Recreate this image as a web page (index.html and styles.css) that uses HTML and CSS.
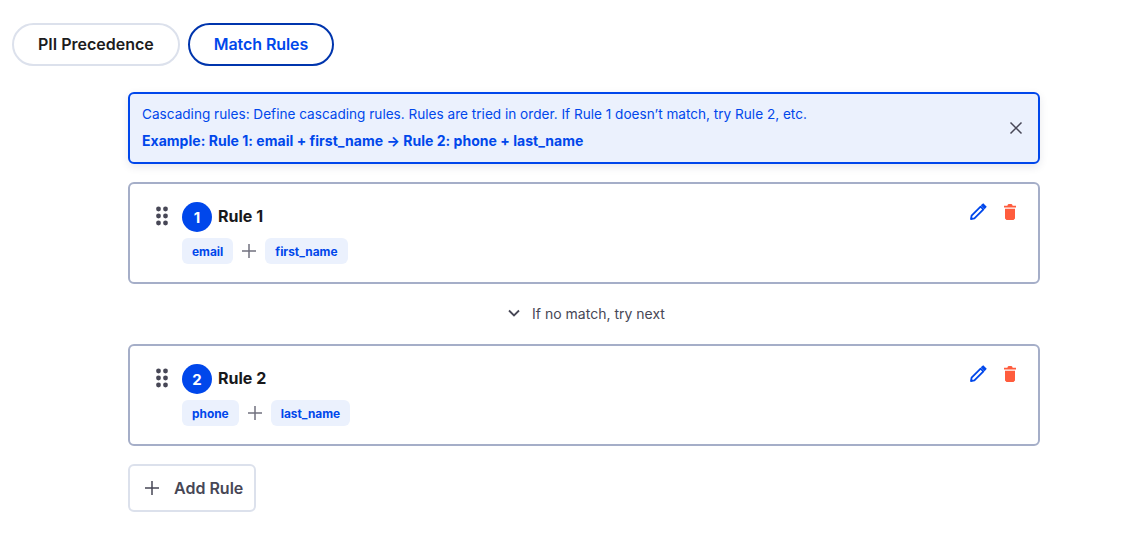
FILE: index.html
```html
<!DOCTYPE html>
<html lang="en">
<head>
    <meta charset="UTF-8">
    <title>Match Rules</title>
    <link rel="stylesheet" href="styles.css">
</head>
<body>
    <div class="tabs">
        <button class="tab">PII Precedence</button>
        <button class="tab tab-active">Match Rules</button>
    </div>

    <div class="content">
        <div class="alert">
            <div class="alert-text">
                <p>Cascading rules: Define cascading rules. Rules are tried in order. If Rule 1 doesn’t match, try Rule 2, etc.</p>
                <p class="alert-example">Example: Rule 1: email + first_name → Rule 2: phone + last_name</p>
            </div>
            <svg class="alert-close" width="14" height="14" viewBox="0 0 14 14"><path d="M1.5 1.5l11 11M12.5 1.5l-11 11" stroke="#474756" stroke-width="1.5" fill="none"/></svg>
        </div>

        <div class="rule">
            <svg class="drag" width="12" height="20" viewBox="0 0 12 20"><g fill="#474756"><circle cx="2.500" cy="3" r="2.400"/><circle cx="9.500" cy="3" r="2.400"/><circle cx="2.500" cy="10" r="2.400"/><circle cx="9.500" cy="10" r="2.400"/><circle cx="2.500" cy="17" r="2.400"/><circle cx="9.500" cy="17" r="2.400"/></g></svg>
            <div class="rule-body">
                <div class="rule-head">
                    <span class="rule-num">1</span>
                    <span class="rule-name">Rule 1</span>
                </div>
                <div class="fields">
                    <span class="chip">email</span>
                    <svg class="plus" width="14" height="14" viewBox="0 0 14 14"><path d="M7 0v14M0 7h14" stroke="#71717f" stroke-width="1.5"/></svg>
                    <span class="chip">first_name</span>
                </div>
            </div>
            <div class="actions">
                <svg width="18" height="18" viewBox="0 0 18 18"><path d="M2 16l.6-3.400L11.600 3.600l2.800 2.800-9 9L2 16z" fill="none" stroke="#0047eb" stroke-width="1.800" stroke-linejoin="round"/><path d="M12.800 2.400l1.400-1.200 2.600 2.600-1.200 1.400z" fill="#0047eb" stroke="#0047eb" stroke-width="1.400"/></svg>
                <svg width="12" height="16" viewBox="0 0 12 16"><path d="M0 1.800h12v1.700H0zM3.500 1l1-1h3l1 1v1.500h-5zM1 4.800h10v9.700L9.500 16h-7L1 14.500z" fill="#ff5c3d"/></svg>
            </div>
        </div>

        <div class="next">
            <svg width="12" height="8" viewBox="0 0 12 8"><path d="M1 1.500l5 5 5-5" fill="none" stroke="#474756" stroke-width="1.800"/></svg>
            <span>If no match, try next</span>
        </div>

        <div class="rule">
            <svg class="drag" width="12" height="20" viewBox="0 0 12 20"><g fill="#474756"><circle cx="2.500" cy="3" r="2.400"/><circle cx="9.500" cy="3" r="2.400"/><circle cx="2.500" cy="10" r="2.400"/><circle cx="9.500" cy="10" r="2.400"/><circle cx="2.500" cy="17" r="2.400"/><circle cx="9.500" cy="17" r="2.400"/></g></svg>
            <div class="rule-body">
                <div class="rule-head">
                    <span class="rule-num">2</span>
                    <span class="rule-name">Rule 2</span>
                </div>
                <div class="fields">
                    <span class="chip">phone</span>
                    <svg class="plus" width="14" height="14" viewBox="0 0 14 14"><path d="M7 0v14M0 7h14" stroke="#71717f" stroke-width="1.5"/></svg>
                    <span class="chip">last_name</span>
                </div>
            </div>
            <div class="actions">
                <svg width="18" height="18" viewBox="0 0 18 18"><path d="M2 16l.6-3.400L11.600 3.600l2.800 2.800-9 9L2 16z" fill="none" stroke="#0047eb" stroke-width="1.800" stroke-linejoin="round"/><path d="M12.800 2.400l1.400-1.200 2.600 2.600-1.200 1.400z" fill="#0047eb" stroke="#0047eb" stroke-width="1.400"/></svg>
                <svg width="12" height="16" viewBox="0 0 12 16"><path d="M0 1.800h12v1.700H0zM3.500 1l1-1h3l1 1v1.500h-5zM1 4.800h10v9.700L9.500 16h-7L1 14.500z" fill="#ff5c3d"/></svg>
            </div>
        </div>

        <button class="add-rule">
            <svg width="14" height="14" viewBox="0 0 14 14"><path d="M7 0v14M0 7h14" stroke="#474756" stroke-width="1.5"/></svg>
            Add Rule
        </button>
    </div>
</body>
</html>
```

FILE: styles.css
```css
* {
    box-sizing: border-box;
}
body {
    font-family: Inter, "Noto Sans", sans-serif;
    margin: 0;
    background: #fff;
    color: #18181b;
}
.tabs {
    display: flex;
    gap: 8px;
    padding: 23px 12px 0;
}
.tab {
    height: 43px;
    padding: 0 24px 1px;
    font: 600 16px Inter, sans-serif;
    color: #1c1c20;
    background: #fff;
    border: 2px solid #dce1ec;
    border-radius: 22px;
}
.tab-active {
    color: #0047eb;
    border-color: #0035ad;
    letter-spacing: -0.08px;
}
.content {
    width: 912px;
    margin: 26px 0 0 128px;
}
.alert {
    display: flex;
    justify-content: space-between;
    align-items: center;
    height: 72px;
    padding: 0 15px 1px 12px;
    font-size: 13.6px;
    color: #0047eb;
    background: #ebf1fd;
    border: 2px solid #0047eb;
    border-radius: 6px;
    box-shadow: 0 3px 8px rgba(30, 40, 80, 0.1);
}
.alert p {
    margin: 0;
    line-height: 27px;
}
.alert .alert-example {
    margin-top: -1px;
    font-size: 14px;
    font-weight: 700;
    letter-spacing: 0.03px;
}
.rule {
    display: flex;
    align-items: flex-start;
    height: 102px;
    margin-top: 18px;
    padding: 18px 22px 0 26px;
    border: 2px solid #a5aec8;
    border-radius: 6px;
}
.next + .rule {
    margin-top: 0;
}
.drag {
    margin: 4px 14px 0 0;
}
.rule-body {
    flex: 1;
}
.rule-head {
    display: flex;
    align-items: center;
    gap: 6px;
}
.rule-num {
    display: flex;
    align-items: center;
    justify-content: center;
    width: 30px;
    height: 30px;
    font-size: 15px;
    font-weight: 700;
    color: #fff;
    background: #0047eb;
    border-radius: 50%;
}
.rule-name {
    margin-top: -2px;
    font-size: 16px;
    font-weight: 700;
}
.fields {
    display: flex;
    align-items: center;
    gap: 9px;
    margin-top: 6px;
}
.chip {
    padding: 1px 10px 0;
    font-size: 11.9px;
    font-weight: 700;
    line-height: 25px;
    color: #0047eb;
    background: #ebf1fd;
    border-radius: 6px;
}
.actions {
    display: flex;
    align-items: center;
    gap: 17px;
    margin-top: 1px;
}
.next {
    display: flex;
    align-items: center;
    justify-content: center;
    gap: 12px;
    height: 60px;
    padding: 0 0 2px 5px;
    font-size: 14px;
    color: #474756;
}
.add-rule {
    display: flex;
    align-items: center;
    gap: 15px;
    height: 48px;
    margin-top: 18px;
    padding: 0 11px 0 15px;
    font: 600 16px Inter, sans-serif;
    color: #474756;
    background: #fff;
    border: 2px solid #dce1ec;
    border-radius: 6px;
}
```
